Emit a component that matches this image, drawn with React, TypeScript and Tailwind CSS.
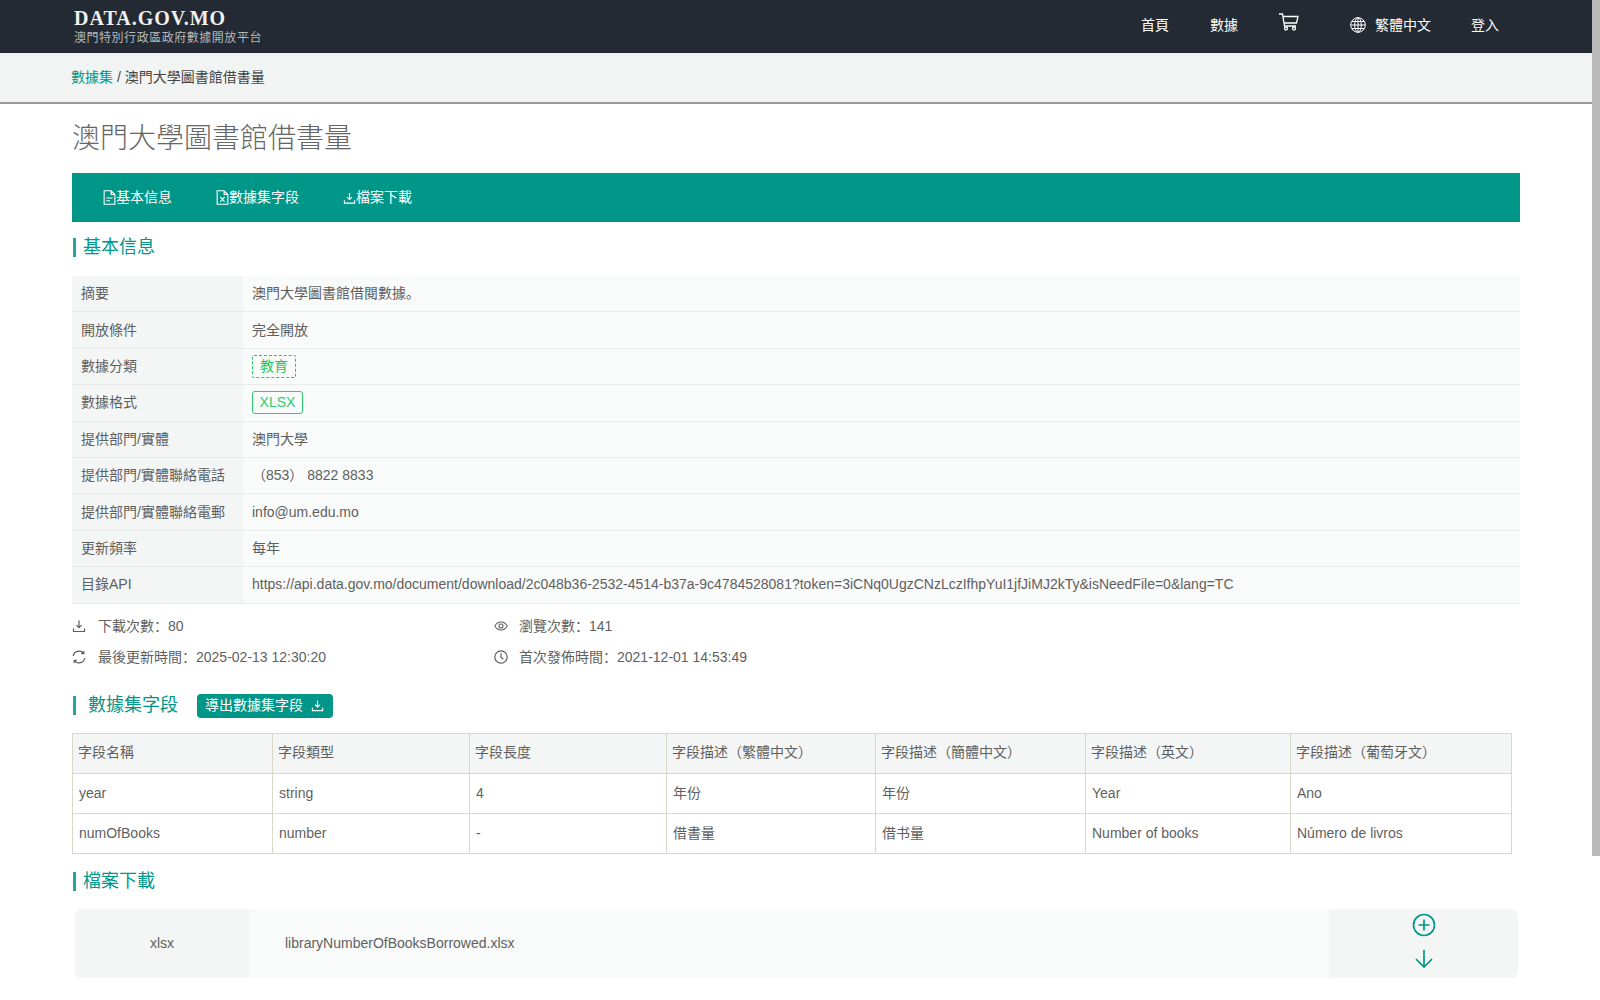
const cjk = "font-['Liberation_Sans','Noto_Sans_CJK_SC',sans-serif]";

const info = [
  ["摘要", "澳門大學圖書館借閱數據。"],
  ["開放條件", "完全開放"],
  ["數據分類", "tag"],
  ["數據格式", "format"],
  ["提供部門/實體", "澳門大學"],
  ["提供部門/實體聯絡電話", "（853） 8822 8833"],
  ["提供部門/實體聯絡電郵", "info@um.edu.mo"],
  ["更新頻率", "每年"],
  ["目錄API", "https://api.data.gov.mo/document/download/2c048b36-2532-4514-b37a-9c4784528081?token=3iCNq0UgzCNzLczIfhpYuI1jfJiMJ2kTy&isNeedFile=0&lang=TC"],
];

const columns = [
  { name: "字段名稱", width: "w-[200px]" },
  { name: "字段類型", width: "w-[197px]" },
  { name: "字段長度", width: "w-[197px]" },
  { name: "字段描述（繁體中文）", width: "w-[209px]" },
  { name: "字段描述（簡體中文）", width: "w-[210px]" },
  { name: "字段描述（英文）", width: "w-[205px]" },
  { name: "字段描述（葡萄牙文）", width: "w-[221px]" },
];

const rows = [
  ["year", "string", "4", "年份", "年份", "Year", "Ano"],
  ["numOfBooks", "number", "-", "借書量", "借书量", "Number of books", "Número de livros"],
];

const DownloadIcon = ({ className }: { className?: string }) => (
  <svg viewBox="0 0 14 14" fill="none" stroke="currentColor" strokeWidth="1.2" className={className}>
    <path d="M7 1.5v7M4.5 6.2 7 8.700l2.500-2.500M1.500 9.500v3h11v-3" />
  </svg>
);

const FileIcon = ({ excel }: { excel?: boolean }) => (
  <svg viewBox="0 0 12 14" fill="none" stroke="currentColor" strokeWidth="1" className="w-[13px] h-[15px]">
    <path d="M1 .7h6.500L11 4.200v9.100H1zM7.500.7v3.500H11" />
    {excel ? <path d="m4 6.500 4 4.500M8 6.500l-4 4.500" /> : <path d="M3 7.500h6M3 10h3.500" />}
  </svg>
);

const EyeIcon = () => (
  <svg viewBox="0 0 14 14" fill="none" stroke="currentColor" strokeWidth="1.1" className="w-[14px] h-[14px] mr-[11px]">
    <path d="M.8 7C2.300 4.300 4.500 3 7 3s4.700 1.300 6.200 4c-1.500 2.700-3.700 4-6.200 4S2.300 9.700.8 7z" />
    <circle cx="7" cy="7" r="2" />
  </svg>
);

const RefreshIcon = () => (
  <svg viewBox="0 0 14 14" fill="none" stroke="currentColor" strokeWidth="1.3" className="w-[14px] h-[14px] mr-[12px]">
    <path d="M1.200 6A5.900 5.900 0 0 1 11.500 3.200M12.800 8A5.900 5.900 0 0 1 2.500 10.800" />
    <path d="M11.800 1v2.700H9.100M2.200 13v-2.700h2.700" />
  </svg>
);

const ClockIcon = () => (
  <svg viewBox="0 0 14 14" fill="none" stroke="currentColor" strokeWidth="1.2" className="w-[14px] h-[14px] mr-[11px]">
    <circle cx="7" cy="7" r="6.200" />
    <path d="M7 3.200V7.500l2.300 1.800" />
  </svg>
);

const SectionTitle = ({ children, className }: { children: string; className?: string }) => (
  <div className={`flex items-center ml-[1px] border-l-[3px] border-[#26a69a] h-[19px] text-[18px] text-[#009688] ${className ?? ""}`}>
    {children}
  </div>
);

export default function App() {
  return (
    <div className={`relative h-[1000px] overflow-hidden bg-white text-[14px] text-[#5f5f5f] ${cjk}`}>
      <header className="h-[53px] bg-[#232a33] flex justify-between pl-[74px] pr-[101px] text-white">
        <div className="pt-[8px]">
          <div className="font-['Liberation_Serif',serif] font-bold text-[20px] leading-[20px] tracking-[1px] text-[#f0f0f0]">DATA.GOV.MO</div>
          <div className="mt-[2px] text-[12px] leading-[16px] tracking-[0.53px] text-[#b5b8bb]">澳門特別行政區政府數據開放平台</div>
        </div>
        <nav className="flex items-center pb-[3px]">
          <span className="mr-[41px]">首頁</span>
          <span className="mr-[41px]">數據</span>
          <svg viewBox="0 0 20 18" fill="none" stroke="currentColor" strokeWidth="1.3" className="w-[20px] h-[18px] mr-[51px] -mt-[6px]">
            <path d="M0 1h3.500l2 12h11.500M4 3.500h15l-1.500 6.500H5" />
            <circle cx="7" cy="15.500" r="1.500" />
            <circle cx="15" cy="15.500" r="1.500" />
          </svg>
          <svg viewBox="0 0 16 16" fill="none" stroke="currentColor" strokeWidth="1" className="w-[16px] h-[16px] mr-[9px]">
            <circle cx="8" cy="8" r="7.300" />
            <ellipse cx="8" cy="8" rx="3.300" ry="7.300" />
            <path d="M8 .7v14.600M.7 8h14.600M1.700 4.500h12.600M1.700 11.500h12.600" />
          </svg>
          <span className="mr-[40px]">繁體中文</span>
          <span>登入</span>
        </nav>
      </header>

      <div className="h-[51px] bg-[#f2f4f3] border-b-2 border-[#999] pl-[71px] flex items-center text-[#444]">
        <span className="text-[#009688]">數據集</span>
        <span>&nbsp;/&nbsp;</span>
        <span>澳門大學圖書館借書量</span>
      </div>

      <main className="pl-[72px] pr-[80px]">
        <h1 className="pt-[17px] h-[69px] text-[28px] leading-[36px] font-light text-[#666]">澳門大學圖書館借書量</h1>

        <div className="h-[49px] bg-[#009688] flex items-center pl-[31px] text-white">
          <span className="flex items-center w-[113px]"><FileIcon />基本信息</span>
          <span className="flex items-center w-[127px]"><FileIcon excel />數據集字段</span>
          <span className="flex items-center"><DownloadIcon className="w-[13px] h-[14px]" />檔案下載</span>
        </div>

        <SectionTitle className="mt-[16px] pl-[7px]">基本信息</SectionTitle>

        <div className="mt-[19px]">
          {info.map(([label, value]) => (
            <div key={label} className="flex h-[36.4px] border-b border-[#e9eaea]">
              <div className="w-[171px] bg-[#f4f6f6] pl-[9px] flex items-center">{label}</div>
              <div className="flex-1 bg-[#f9fafa] pl-[9px] flex items-center">
                {value === "tag" ? (
                  <span className="h-[23px] w-[44px] flex items-center justify-center border border-dashed border-[#17c964] rounded-[2px] text-[#17c964]">教育</span>
                ) : value === "format" ? (
                  <span className="h-[23px] w-[51px] flex items-center justify-center border border-[#2ecc71] rounded-[3px] text-[#2ecc71]">XLSX</span>
                ) : (
                  value
                )}
              </div>
            </div>
          ))}
        </div>

        <div className="mt-[12px] grid grid-cols-[422px_1fr] gap-y-[10px] text-[14px]">
          <div className="flex items-center h-[21px]"><DownloadIcon className="w-[14px] h-[14px] mr-[12px]" />下載次數：80</div>
          <div className="flex items-center h-[21px]"><EyeIcon />瀏覽次數：141</div>
          <div className="flex items-center h-[21px]"><RefreshIcon />最後更新時間：2025-02-13 12:30:20</div>
          <div className="flex items-center h-[21px]"><ClockIcon />首次發佈時間：2021-12-01 14:53:49</div>
        </div>

        <div className="mt-[26px] flex items-center">
          <SectionTitle className="pl-[12px]">數據集字段</SectionTitle>
          <button className="ml-[19px] h-[24px] w-[136px] bg-[#009688] rounded-[4px] text-white flex items-center pl-[8px] text-[14px]">
            導出數據集字段
            <DownloadIcon className="w-[13px] h-[13px] ml-[8px]" />
          </button>
        </div>

        <table className="mt-[15px] w-[1439px] table-fixed border-collapse">
          <thead>
            <tr className="h-[40px] bg-[#f4f6f6]">
              {columns.map((c) => (
                <th key={c.name} className={`${c.width} border border-[#d8d8c8] pl-[5px] pb-[1px] text-left font-normal`}>{c.name}</th>
              ))}
            </tr>
          </thead>
          <tbody>
            {rows.map((r) => (
              <tr key={r[0]} className="h-[40px]">
                {r.map((cell, i) => (
                  <td key={i} className="border border-[#d8d8c8] px-[6px]">{cell}</td>
                ))}
              </tr>
            ))}
          </tbody>
        </table>

        <SectionTitle className="mt-[18px] pl-[7px]">檔案下載</SectionTitle>

        <div className="ml-[3px] mt-[18px] w-[1443px] h-[69px] flex rounded-[6px] overflow-hidden bg-[#f9fafa]">
          <div className="w-[174px] bg-[#f4f6f6] flex items-center justify-center">xlsx</div>
          <div className="flex-1 pl-[36px] flex items-center">libraryNumberOfBooksBorrowed.xlsx</div>
          <div className="w-[189px] bg-[#f4f6f6] flex flex-col items-center text-[#009688]">
            <svg viewBox="0 0 24 24" fill="none" stroke="currentColor" strokeWidth="1.700" className="w-[24px] h-[24px] mt-[4px]">
              <circle cx="12" cy="12" r="10.500" />
              <path d="M12 6.500v11M6.500 12h11" />
            </svg>
            <svg viewBox="0 0 20 20" fill="none" stroke="currentColor" strokeWidth="1.700" className="w-[20px] h-[20px] mt-[12px]">
              <path d="M10 1v17M2 10l8 8 8-8" />
            </svg>
          </div>
        </div>
      </main>

      <div className="absolute top-0 right-0 w-[8px] h-[856px] bg-[#b9b9b9]" />
    </div>
  );
}
